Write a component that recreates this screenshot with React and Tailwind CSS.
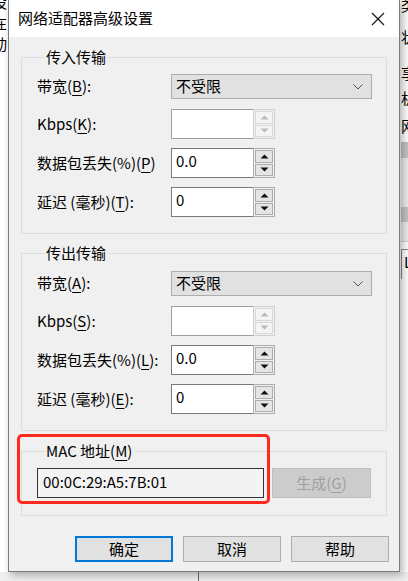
import React from 'react';

const FONT = "font-['Noto_Sans_CJK_SC','Noto_Sans',sans-serif]";

// label parts: [before, mnemonic, after]
const Label = ({ parts }) => (
  <span className="whitespace-nowrap">
    {parts[0]}
    <u className="underline-offset-[3px]">{parts[1]}</u>
    {parts[2]}
  </span>
);

const Arrow = ({ up, disabled }) => (
  <svg width="9" height="5" viewBox="0 0 9 5">
    <path d={up ? 'M0.5 4.5 L4.5 0.5 L8.5 4.5 Z' : 'M0.5 0.5 L4.5 4.5 L8.5 0.5 Z'} fill={disabled ? '#b9b9b9' : '#111'} />
  </svg>
);

function Spin({ value, disabled }) {
  return (
    <div className="flex h-[30px] w-[104px]">
      <div className={`flex-1 bg-white border border-r-0 ${disabled ? 'border-[#a0a0a0]' : 'border-[#7a7a7a]'} pl-[4px] text-[15px] leading-[24px]`}>
        {value}
      </div>
      <div className={`w-[22px] flex flex-col border ${disabled ? 'border-[#cfcfcf]' : 'border-[#adadad]'} bg-[#f0f0f0] p-[1px] gap-[1px]`}>
        <div className={`flex-1 flex items-center justify-center border ${disabled ? 'border-[#d9d9d9] bg-[#f4f4f4]' : 'border-[#adadad] bg-[#e5e5e5]'}`}>
          <Arrow up disabled={disabled} />
        </div>
        <div className={`flex-1 flex items-center justify-center border ${disabled ? 'border-[#d9d9d9] bg-[#f4f4f4]' : 'border-[#adadad] bg-[#e5e5e5]'}`}>
          <Arrow disabled={disabled} />
        </div>
      </div>
    </div>
  );
}

function Select() {
  return (
    <div className="h-[25px] w-[201px] bg-[#e1e1e1] border border-[#adadad] flex items-center justify-between pl-[4px] pr-[8px] text-[15px]">
      <span>不受限</span>
      <svg width="10" height="6" viewBox="0 0 10 6">
        <path d="M0.5 0.5 L5 5 L9.5 0.5" fill="none" stroke="#555" strokeWidth="1" />
      </svg>
    </div>
  );
}

function Group({ title, rows, pt }) {
  return (
    <fieldset className="border border-[#dcdcdc] pl-[15px] pb-[16px]">
      <legend className="ml-[7px] px-[2px] text-[15px] leading-[20px]">{title}</legend>
      <div className={`flex flex-col ${pt}`}>
        <div className="flex items-center">
          <div className="w-[134px] text-[15px]"><Label parts={rows[0]} /></div>
          <Select />
        </div>
        <div className="flex flex-col gap-[9px] mt-[10px]">
          {rows.slice(1).map((r, i) => (
            <div key={i} className="flex items-center">
              <div className="w-[134px] text-[15px]"><Label parts={r.label} /></div>
              <Spin value={r.value} disabled={r.disabled} />
            </div>
          ))}
        </div>
      </div>
    </fieldset>
  );
}

const inRows = [
  ['带宽(', 'B', '):'],
  { label: ['Kbps(', 'K', '):'], value: '', disabled: true },
  { label: ['数据包丢失(%)(', 'P', ')'], value: '0.0' },
  { label: ['延迟 (毫秒)(', 'T', '):'], value: '0' },
];

const outRows = [
  ['带宽(', 'A', '):'],
  { label: ['Kbps(', 'S', '):'], value: '', disabled: true },
  { label: ['数据包丢失(%)(', 'L', '):'], value: '0.0' },
  { label: ['延迟 (毫秒)(', 'E', '):'], value: '0' },
];

export default function App() {
  return (
    <div className={`relative w-[408px] h-[581px] overflow-hidden bg-white text-black ${FONT}`}>
      {/* window behind the dialog */}
      <div className="absolute left-[-8px] top-[-9px] flex flex-col text-[15px] leading-[21px]">
        <span>设</span>
        <span>在</span>
        <span>动</span>
      </div>
      <div className="absolute left-[401px] top-0 w-[40px] flex flex-col text-[15px]">
        <span className="leading-[15px] mt-[-3px]">类</span>
        <span className="mt-[14px]">状</span>
        <span className="mt-[13px]">享</span>
        <span className="mt-[3px]">机</span>
        <span className="mt-[5px]">网</span>
        <div className="mt-[5px] h-[16px] bg-[#c4c4c4]" />
        <div className="h-[49px] bg-[#ececec]" />
        <div className="h-[15px] bg-[#c4c4c4]" />
        <div className="h-[20px] bg-[#ececec] border-b border-[#d0d0d0]" />
        <div className="mt-[7px] h-[30px] border-t border-l border-[#888] pl-[2px] text-[15px] leading-[24px]">LA</div>
      </div>
      <div className="absolute left-0 top-[572px] w-[408px] h-[9px] bg-[#efefef] flex">
        <div className="ml-[198px] w-px h-full bg-[#6a6a6a]" />
      </div>

      {/* dialog */}
      <div className="absolute left-[8px] top-[-1px] w-[392px] border border-[#7a7a7a] bg-[#f0f0f0] shadow-[3px_3px_8px_rgba(0,0,0,0.3)]">
        <div className="h-[37px] bg-white flex items-center justify-between pl-[9px] pr-[14px]">
          <span className="text-[15px]">网络适配器高级设置</span>
          <svg width="14" height="14" viewBox="0 0 14 14">
            <path d="M1 1 L13 13 M13 1 L1 13" stroke="#111" strokeWidth="1.1" />
          </svg>
        </div>

        <div className="px-[12px] pt-[10px] pb-[9px] flex flex-col">
          <Group title="传入传输" rows={inRows} pt="pt-[7px]" />
          <div className="mt-[9px]">
            <Group title="传出传输" rows={outRows} pt="pt-[8px]" />
          </div>

          <fieldset className="mt-[10px] border border-[#dcdcdc] pl-[15px] pb-[17px]">
            <legend className="ml-[7px] px-[2px] text-[15px] leading-[20px]">
              MAC 地址(<u className="underline-offset-[3px]">M</u>)
            </legend>
            <div className="flex items-center gap-[8px] pt-[7px]">
              <div className="w-[227px] h-[30px] border border-[#333] bg-[#f3f3f3] pl-[5px] text-[15px] leading-[26px]">
                00:0C:29:A5:7B:01
              </div>
              <div className="w-[99px] h-[30px] border border-[#bfbfbf] bg-[#cccccc] text-[#a0a0a0] flex items-center justify-center text-[15px]">
                生成(<u className="underline-offset-[3px]">G</u>)
              </div>
            </div>
          </fieldset>

          <div className="mt-[20px] flex justify-end gap-[10px] pr-[-2px] mr-[-2px]">
            <button className="w-[98px] h-[26px] border-2 border-[#0078d7] bg-[#e1e1e1] text-[15px]">确定</button>
            <button className="w-[98px] h-[26px] border border-[#adadad] bg-[#e1e1e1] text-[15px]">取消</button>
            <button className="w-[98px] h-[26px] border border-[#adadad] bg-[#e1e1e1] text-[15px]">帮助</button>
          </div>
        </div>

        {/* red highlight */}
        <div className="absolute left-[8px] top-[434px] w-[253px] h-[70px] border-[3px] border-[#ff2a1f] rounded-[5px]" />
      </div>
    </div>
  );
}
